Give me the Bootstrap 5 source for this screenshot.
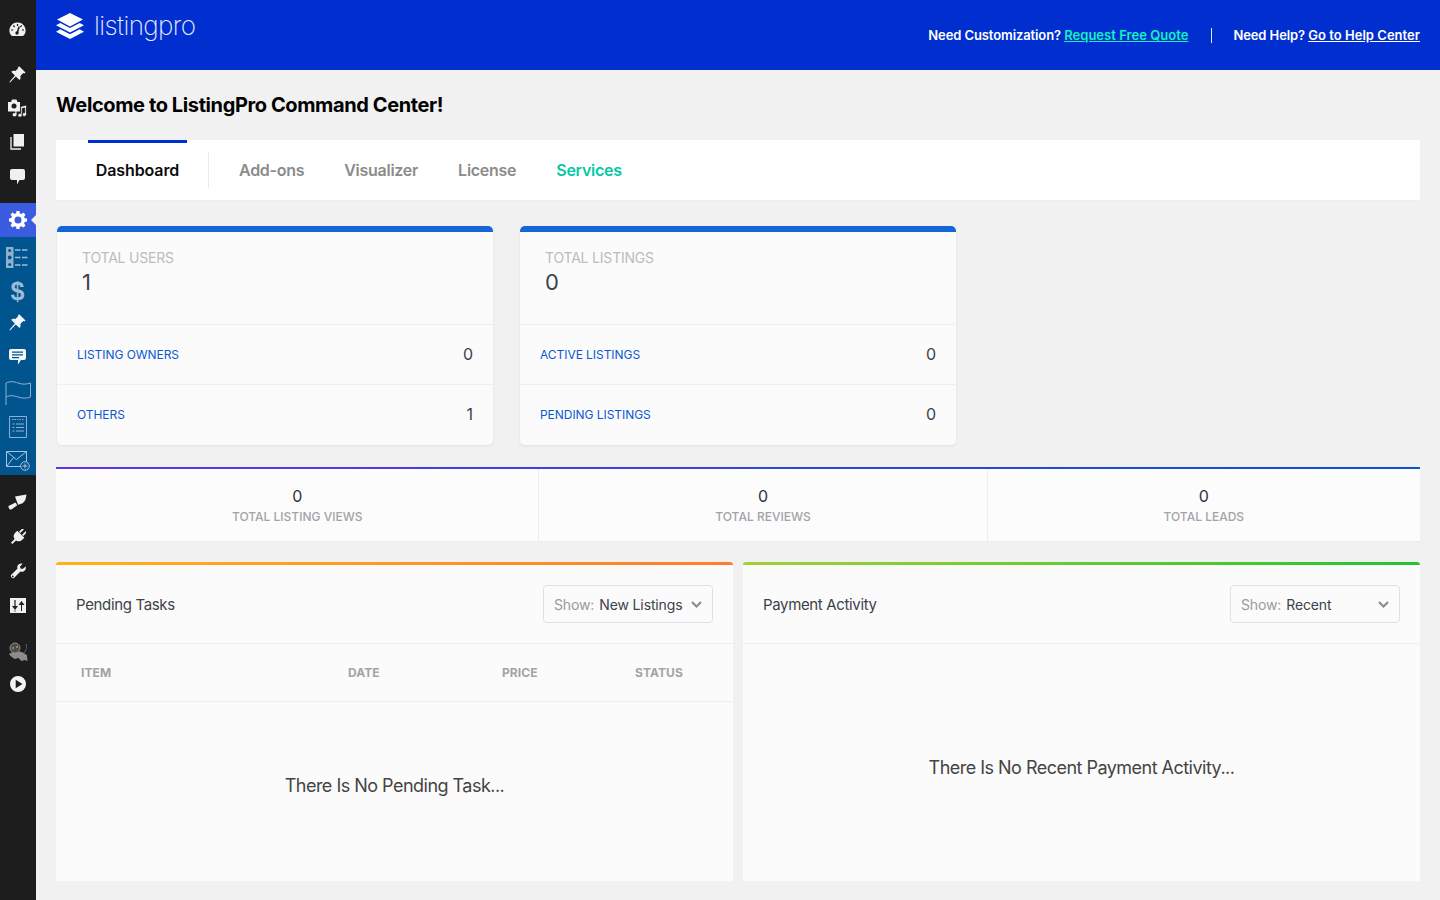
<!DOCTYPE html>
<html lang="en">
<head>
  <meta charset="UTF-8">
  <meta name="viewport" content="width=device-width, initial-scale=1.0">
  <title>ListingPro Command Center</title>
  <link href="https://cdn.jsdelivr.net/npm/bootstrap@5.3.3/dist/css/bootstrap.min.css" rel="stylesheet">
  <style>
    html, body { height: 900px; overflow: hidden; }
    body { background: #f1f1f1; font-family: Inter, "Liberation Sans", sans-serif; color: #3c434a; }

    /* admin rail */
    .rail { width: 36px; height: 900px; background: #1d1d1d; flex: none; padding-top: 12px; }
    .rail-slot { height: 34px; display: flex; align-items: center; justify-content: center; padding-right: 1px; }
    .rail-group { margin-top: 11px; }
    .rail-active { margin-top: 9px; height: 34px; background: #3b5be0; position: relative; }
    .rail-active::after { content: ""; position: absolute; right: 0; top: 12px; border: 5px solid transparent; border-right-color: #f1f1f1; border-left: 0; }
    .rail-blue { background: #00558f; margin-top: 0; padding: 3px 0 14px; height: 238px; }
    .up-3 { margin-top: -3px; }
    .down-2 { margin-top: 2px; }
    .down-1 { margin-top: 1px; }
    .rail-tools { margin-top: 10px; }
    .rail-cat { margin-top: 13px; }
    .up-2 { margin-top: -2px; }
    .dollar-mark { font-size: 25px; color: #9fbcd6; font-family: "Liberation Sans", sans-serif; }

    /* top banner */
    .banner { height: 70px; background: #012fcf; padding: 0 20px; color: #fff; }
    .logo-word { font-family: Inter, sans-serif; font-weight: 200; font-size: 26px; letter-spacing: -.6px; line-height: 1; color: #e8ecfb; }
    .logo-box { margin-top: -18px; gap: 10px; }
    .banner-text { font-size: 13px; font-weight: 600; color: #fff; padding-top: 1px; letter-spacing: -.1px; }
    .banner-text a { color: #fff; letter-spacing: .03px; }
    .banner-text a.quote { color: #14f1c1; }
    .banner-sep { width: 1px; height: 15px; background: #dfe5fb; margin: 0 21px 0 23px; }

    .page-body { padding: 0 20px; }
    .page-title { font-size: 20px; font-weight: 700; color: #000; letter-spacing: -.39px; margin: 0; height: 70px; line-height: 70px; }

    /* tabs */
    .tab-bar { height: 61px; background: #fff; border-bottom: 1px solid #ebedf4; padding-left: 32px; align-items: center; }
    .tab-bar .nav-link { font-size: 16px; font-weight: 600; color: #8b8b8b; padding: 0; margin-right: 40px; letter-spacing: -.27px; }
    .tab-bar .nav-link.tab-on { color: #0c0c0c; height: 60px; width: 99px; text-align: center; margin-right: 0; border-top: 3px solid #012fcf; line-height: 55px; letter-spacing: -.1px; }
    .tab-bar .nav-link.tab-green { color: #04c8a6; }
    .tab-rule { width: 1px; height: 36px; background: #e9ebf1; margin: 0 30px 0 21px; }

    /* count cards */
    .count-row { margin-top: 25px; margin-left: 1px; gap: 27px; }
    .count-card { width: 436px; height: 219px; background: #fbfbfb; border: 0; border-top: 6px solid #1565d8; border-radius: 5px; box-shadow: 0 1px 3px rgba(40, 60, 140, .08); }
    .count-head { height: 93px; padding: 17px 25px 0; border-bottom: 1px solid #eeeff5; }
    .count-label { font-size: 14px; color: #bcbcbc; line-height: 18px; letter-spacing: -.2px; }
    .count-num { font-size: 22px; color: #3c434a; line-height: 30px; }
    .count-line { height: 60px; padding: 0 20px; border-bottom: 1px solid #eeeff5; background: transparent; }
    .count-line:last-child { border-bottom: 0; }
    .count-line a { font-size: 12px; color: #0b57d0; text-decoration: none; letter-spacing: -.05px; }
    .count-line span { font-size: 16px; color: #3c434a; padding-bottom: 2px; }

    /* stat strip */
    .stat-strip { margin-top: 22px; height: 74px; background: #fcfcfc; border-top: 2px solid transparent; border-image: linear-gradient(90deg, #6236e2, #0b51d1) 1; border-bottom: 0; box-shadow: 0 1px 0 #ebebef; }
    .stat-cell { text-align: center; border-left: 1px solid #eeeef2; padding-top: 17px; }
    .stat-cell:first-child { border-left: 0; }
    .stat-num { font-size: 16px; line-height: 20px; color: #2f3338; }
    .stat-label { font-size: 12px; line-height: 20px; font-weight: 500; color: #a3a3a8; margin-top: 1px; }

    /* panels */
    .panel-row { margin-top: 21px; gap: 10px; }
    .lp-panel { width: 677px; height: 319px; background: #fbfbfb; border: 0; border-radius: 3px 3px 0 0; position: relative; }
    .lp-panel::before { content: ""; height: 3px; display: block; border-radius: 3px 3px 0 0; flex: none; }
    .lp-orange::before { background: linear-gradient(90deg, #ffb21a, #ff7d2a); }
    .lp-green::before { background: linear-gradient(90deg, #a4d037, #22c52c); }
    .panel-head { height: 79px; flex: none; padding: 0 20px; border-bottom: 1px solid #eeeff4; }
    .panel-title { font-size: 15px; color: #3c434a; letter-spacing: -.35px; padding-top: 2px; }
    .show-box { width: 170px; height: 38px; border: 1px solid #dfe0e6; border-radius: 4px; font-size: 14px; padding: 0 10px; background: #fbfbfb; letter-spacing: -.13px; }
    .show-muted { color: #9a9a9a; margin-right: 5px; }
    .show-value { color: #3c434a; }
    .show-chev { margin-left: auto; }
    .task-table { margin: 0; table-layout: fixed; --bs-table-bg: transparent; }
    .task-table th { height: 57px; font-size: 12px; font-weight: 700; color: #a3a3a8; vertical-align: middle; padding: 1px 0 0 25px; border-bottom: 1px solid #eeeff4; letter-spacing: .08px; }
    .col-item { width: 267px; }
    .col-date { width: 154px; }
    .col-price { width: 133px; }
    .empty-note { font-size: 18px; color: #444; text-align: center; letter-spacing: -.52px; flex: none; }
    .empty-tasks { height: 168px; }
    .empty-pay { height: 246px; }
  </style>
</head>
<body>
  <div class="d-flex">
    <div class="rail">
      <div class="rail-slot">
        <svg width="17" height="15" viewBox="0 0 17 15"><path fill="#f0f0f0" d="M8.500.5a8 8 0 0 0-6.600 12.600c.4.600 1 .9 1.700.9h9.800c.7 0 1.300-.3 1.700-.9A8 8 0 0 0 8.500.5z"/><path stroke="#1d1d1d" stroke-width="1.200" d="M8.500 2v2M4.300 3.500l1.300 1.500M12.700 3.500l-1.300 1.500M2 8h2.200M13 8h2"/><path stroke="#1d1d1d" stroke-width="1.500" d="M10.200 4.500L8.200 11"/><circle cx="8" cy="11" r="1.700" fill="#1d1d1d"/></svg>
      </div>
      <div class="rail-slot rail-group">
        <svg width="17" height="17" viewBox="0 0 17 17"><path fill="#f0f0f0" d="M10.500.5l6 6-1.200 1.100-1-.7-3 3c.6 1.600.3 3.100-.8 4.200L6.800 10.400 1 16.500l-.7-.6L5.900 9.500 2.200 5.800c1.100-1.100 2.700-1.400 4.200-.8l3-3-.7-1z"/></svg>
      </div>
      <div class="rail-slot">
        <svg width="19" height="18" viewBox="0 0 19 18"><path fill="#f0f0f0" d="M0 3h3l1-2.500h4.500L9.500 3H12v9.500H0z"/><circle cx="6" cy="7" r="2.500" fill="#1d1d1d"/><path fill="#f0f0f0" stroke="#1d1d1d" stroke-width=".8" d="M12.500 7.500l6-1.500v9.500a2.200 1.900 0 1 1-1.700-1.800V9l-2.600.6v6.600a2.200 1.900 0 1 1-1.700-1.800z"/><ellipse cx="6.500" cy="15.800" rx="2" ry="1.800" fill="#f0f0f0"/><path fill="#f0f0f0" d="M7.300 11h1.200v4.800H7.300z"/></svg>
      </div>
      <div class="rail-slot">
        <svg width="15" height="16" viewBox="0 0 15 16"><path fill="#f0f0f0" d="M3.500 0H14v12.500H3.500z"/><path fill="none" stroke="#f0f0f0" stroke-width="1.300" d="M1 3v12h10"/></svg>
      </div>
      <div class="rail-slot down-1">
        <svg width="15" height="16" viewBox="0 0 15 16"><path fill="#f0f0f0" d="M2 0h11a2 2 0 0 1 2 2v7a2 2 0 0 1-2 2H9.500l-2.500 4.500V11H2a2 2 0 0 1-2-2V2a2 2 0 0 1 2-2z"/></svg>
      </div>
      <div class="rail-slot rail-active">
        <svg width="18" height="18" viewBox="0 0 18 18"><path fill="#fff" fill-rule="evenodd" d="M7.500 0h3l.4 2.400 1.500.6 2-1.400 2.100 2.100-1.400 2 .6 1.500 2.300.4v3l-2.300.4-.6 1.500 1.400 2-2.100 2.100-2-1.400-1.500.6-.4 2.300h-3l-.4-2.300-1.500-.6-2 1.400-2.100-2.100 1.400-2-.6-1.500L0 10.500v-3l2.300-.4.600-1.500-1.400-2L3.600 1.500l2 1.400 1.500-.6zM9 5.500a3.500 3.500 0 1 0 0 7 3.500 3.500 0 0 0 0-7z"/></svg>
      </div>
      <div class="rail-blue">
        <div class="rail-slot">
          <svg width="23" height="21" viewBox="0 0 23 21"><path fill="#8fb0cf" d="M0 0h7.500v21H0z"/><circle cx="3.700" cy="3.500" r="1.500" fill="#00558f"/><circle cx="3.700" cy="10.500" r="1.900" fill="#00558f"/><circle cx="3.700" cy="17.500" r="1.500" fill="#00558f"/><path stroke="#9fbcd6" stroke-width="1.300" stroke-dasharray="5.500 1.500" d="M9 3h14M9 10.500h14M9 18h14"/></svg>
        </div>
        <div class="rail-slot">
          <span class="d-block fw-bold lh-1 dollar-mark">$</span>
        </div>
        <div class="rail-slot up-3">
          <svg width="17" height="17" viewBox="0 0 17 17"><path fill="#f4f7fa" d="M10.500.5l6 6-1.200 1.100-1-.7-3 3c.6 1.600.3 3.100-.8 4.200L6.800 10.400 1 16.500l-.7-.6L5.900 9.500 2.200 5.800c1.100-1.100 2.700-1.400 4.200-.8l3-3-.7-1z"/></svg>
        </div>
        <div class="rail-slot down-1">
          <svg width="17" height="16" viewBox="0 0 17 16"><path fill="#f4f7fa" fill-rule="evenodd" d="M2 0h13a2 2 0 0 1 2 2v7a2 2 0 0 1-2 2h-3l-3 4.500V11H2a2 2 0 0 1-2-2V2a2 2 0 0 1 2-2zM3 2.500v1.300h11V2.500zM3 5.200v1.300h11V5.200zM3 7.900v1.300h7V7.900z"/></svg>
        </div>
        <div class="rail-slot down-2">
          <svg width="26" height="24" viewBox="0 0 26 24"><path fill="none" stroke="#8fb0cf" stroke-width="1" d="M1 24V2c4-2 8-1.500 12 0s8 1.500 12.500 0v14c-4 1.500-8 1.500-12.500 0s-8-2-12 0"/></svg>
        </div>
        <div class="rail-slot">
          <svg width="18" height="22" viewBox="0 0 18 22"><path fill="none" stroke="#8fb0cf" d="M.5.500h17v21H.5z"/><path stroke="#8fb0cf" stroke-width="1.200" stroke-dasharray="1.500 1" d="M3 3.500h12"/><path stroke="#8fb0cf" stroke-width="1.200" d="M7 8h8M7 11.500h8M7 15h8M3.500 8h2M3.500 11.500h2M3.500 15h2"/></svg>
        </div>
        <div class="rail-slot">
          <svg width="24" height="20" viewBox="0 0 24 20"><path fill="none" stroke="#a9c4dc" d="M.500.500h20v15H.500zM.500.500l10 8 10-8M.500 15.500l7-9M20.500 15.500l-3-4"/><circle cx="19" cy="15" r="4.300" fill="#00558f" stroke="#a9c4dc"/><path stroke="#a9c4dc" d="M19 12.500v5M16.500 15h5"/></svg>
        </div>
      </div>
      <div class="rail-slot rail-tools">
        <svg width="19" height="16" viewBox="0 0 19 16"><path fill="#f0f0f0" d="M.5 12L7.500 8.500l1.800 2.800-6 4.300c-1.300.5-3.100-1.700-2.800-3.600zM7 2.500L18.500.5c-.3 1.500-.4 3-.9 4.500-.5 1.600-1.600 3.100-3 4.300l-4.500 1.400z"/></svg>
      </div>
      <div class="rail-slot down-1">
        <svg width="16" height="16" viewBox="0 0 16 16"><g transform="rotate(45 8 8)"><path fill="#f0f0f0" d="M5 -1.500h1.800v5H5zM9.200 -1.500H11v5H9.200zM3 4h10v3a5 5 0 0 1-4 4.800V17H7v-5.200a5 5 0 0 1-4-4.800z"/></g></svg>
      </div>
      <div class="rail-slot">
        <svg width="16" height="16" viewBox="0 0 16 16"><path fill="#f0f0f0" fill-rule="evenodd" d="M15.700 3.500c.5 2-.2 3.800-1.800 4.700-1.200.7-2.500.6-3.500.2L4 15c-1.100 1.100-3.700-.6-3-3L7.400 5.800c-.4-1.600 0-3.200 1.200-4.200C9.700.6 11.100.3 12.600.7L10 3.500l.5 2 2.100.6zM2.800 12.500a.9.9 0 1 0 0 1.800.9.9 0 0 0 0-1.800z"/></svg>
      </div>
      <div class="rail-slot">
        <svg width="16" height="15" viewBox="0 0 16 15"><path fill="#f0f0f0" d="M0 0h16v15H0z"/><path fill="#1d1d1d" d="M4.400 2h1.200v6H8l-3 4-3-4h2.400zM11 7H8.500l3-4 3 4H12v6h-1zM4.400 12.500h1.200v1H4.400z"/></svg>
      </div>
      <div class="rail-slot rail-cat">
        <svg width="20" height="20" viewBox="0 0 20 20"><path fill="#8c8c8c" d="M1 12c2-1 5-3 8-2 2-1 6 0 8 2l2 1 .5 6-3-1-3 1-3-3-4 1-4-3z"/><circle cx="7" cy="6" r="5" fill="#4d4d4d" stroke="#8c8c8c"/><circle cx="5" cy="6" r="1" fill="#e0872c"/><circle cx="9" cy="5" r="1" fill="#e0872c"/><path stroke="#6a6a6a" d="M18 2c1 3 0 6-2 9"/></svg>
      </div>
      <div class="rail-slot up-2">
        <svg width="16" height="16" viewBox="0 0 16 16"><path fill="#f4f4f4" fill-rule="evenodd" d="M8 0a8 8 0 1 1 0 16A8 8 0 0 1 8 0zM5.700 3.800v8.400L12.500 8z"/></svg>
      </div>
    </div>

    <div class="flex-grow-1">
      <header class="banner d-flex align-items-center justify-content-between">
        <div class="logo-box d-flex align-items-center">
          <svg width="28" height="26" viewBox="0 0 28 26"><path fill="#fff" d="M14 0l13 6.500-13 7-13-7z"/><path fill="#fff" d="M4.300 10L14 15l9.700-5L28 12.200 14 19.500 0 12.200z"/><path fill="#fff" d="M4.300 16.300L14 21.300l9.700-5L28 18.700 14 26 0 18.700z"/></svg>
          <span class="logo-word">listingpro</span>
        </div>
        <div class="banner-text d-flex align-items-center">
          <span>Need Customization? <a class="quote" href="#">Request Free Quote</a></span>
          <span class="banner-sep"></span>
          <span>Need Help? <a href="#">Go to Help Center</a></span>
        </div>
      </header>

      <main class="page-body">
        <h1 class="page-title">Welcome to ListingPro Command Center!</h1>

        <nav class="nav tab-bar">
          <a class="nav-link tab-on" href="#">Dashboard</a>
          <span class="tab-rule"></span>
          <a class="nav-link" href="#">Add-ons</a>
          <a class="nav-link" href="#">Visualizer</a>
          <a class="nav-link" href="#">License</a>
          <a class="nav-link tab-green" href="#">Services</a>
        </nav>

        <div class="d-flex count-row">
          <div class="card count-card">
            <div class="count-head">
              <div class="count-label">TOTAL USERS</div>
              <div class="count-num">1</div>
            </div>
            <div class="count-line d-flex align-items-center justify-content-between"><a href="#">LISTING OWNERS</a><span>0</span></div>
            <div class="count-line d-flex align-items-center justify-content-between"><a href="#">OTHERS</a><span>1</span></div>
          </div>
          <div class="card count-card">
            <div class="count-head">
              <div class="count-label">TOTAL LISTINGS</div>
              <div class="count-num">0</div>
            </div>
            <div class="count-line d-flex align-items-center justify-content-between"><a href="#">ACTIVE LISTINGS</a><span>0</span></div>
            <div class="count-line d-flex align-items-center justify-content-between"><a href="#">PENDING LISTINGS</a><span>0</span></div>
          </div>
        </div>

        <div class="stat-strip d-flex">
          <div class="stat-cell flex-fill"><div class="stat-num">0</div><div class="stat-label">TOTAL LISTING VIEWS</div></div>
          <div class="stat-cell flex-fill"><div class="stat-num">0</div><div class="stat-label">TOTAL REVIEWS</div></div>
          <div class="stat-cell flex-fill"><div class="stat-num">0</div><div class="stat-label">TOTAL LEADS</div></div>
        </div>

        <div class="d-flex panel-row">
          <section class="card lp-panel lp-orange">
            <div class="panel-head d-flex align-items-center justify-content-between">
              <span class="panel-title">Pending Tasks</span>
              <div class="show-box d-flex align-items-center">
                <span class="show-muted">Show:</span><span class="show-value">New Listings</span>
                <svg class="show-chev" width="11" height="7" viewBox="0 0 11 7"><path fill="none" stroke="#8a8a8a" stroke-width="2" d="M1 1l4.500 4.500L10 1"/></svg>
              </div>
            </div>
            <table class="table task-table">
              <thead>
                <tr><th class="col-item">ITEM</th><th class="col-date">DATE</th><th class="col-price">PRICE</th><th>STATUS</th></tr>
              </thead>
            </table>
            <div class="empty-note empty-tasks d-flex align-items-center justify-content-center">There Is No Pending Task...</div>
          </section>
          <section class="card lp-panel lp-green">
            <div class="panel-head d-flex align-items-center justify-content-between">
              <span class="panel-title">Payment Activity</span>
              <div class="show-box d-flex align-items-center">
                <span class="show-muted">Show:</span><span class="show-value">Recent</span>
                <svg class="show-chev" width="11" height="7" viewBox="0 0 11 7"><path fill="none" stroke="#8a8a8a" stroke-width="2" d="M1 1l4.500 4.500L10 1"/></svg>
              </div>
            </div>
            <div class="empty-note empty-pay d-flex align-items-center justify-content-center">There Is No Recent Payment Activity...</div>
          </section>
        </div>
      </main>
    </div>
  </div>
  <script src="https://cdn.jsdelivr.net/npm/bootstrap@5.3.3/dist/js/bootstrap.bundle.min.js"></script>
</body>
</html>
